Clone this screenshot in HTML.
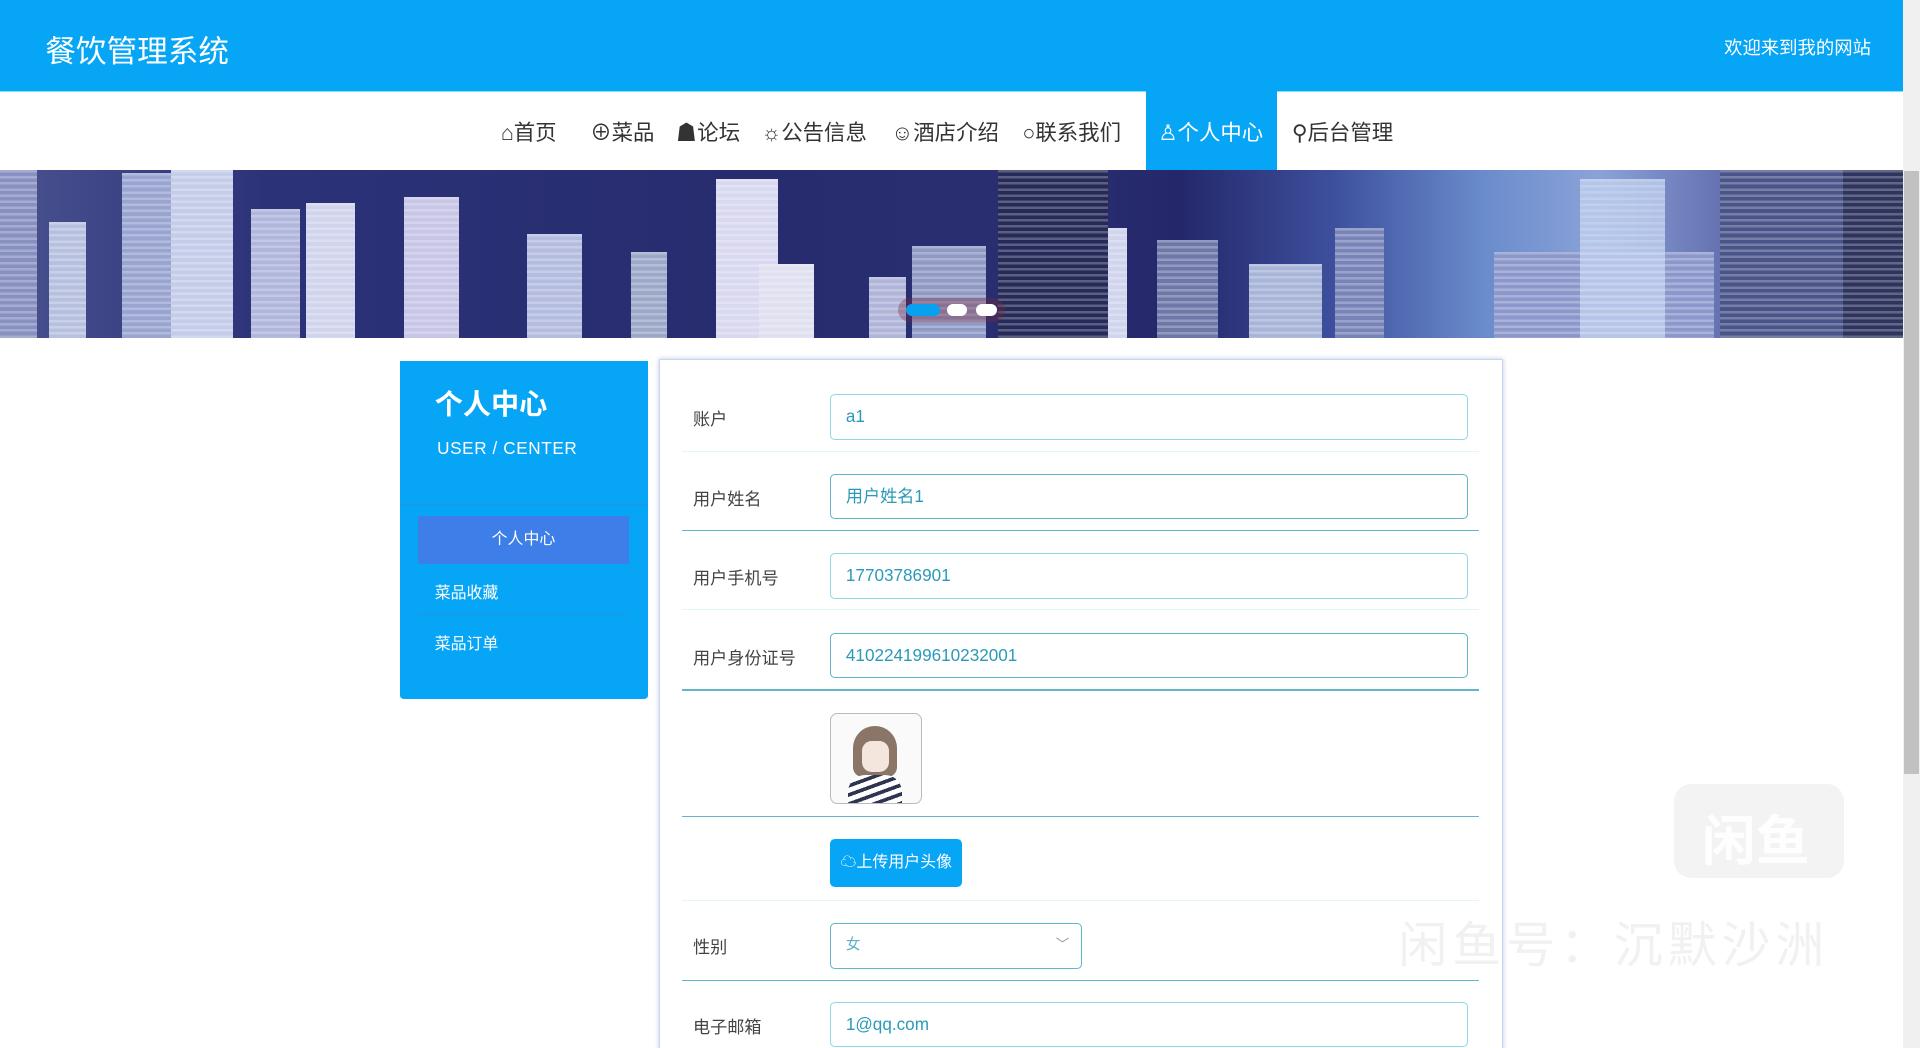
<!DOCTYPE html>
<html><head><meta charset="utf-8"><style>
html,body{margin:0;padding:0;overflow:hidden;background:#fff}
#w{zoom:1.22449;width:1568px;height:856px;position:relative;overflow:hidden;font-family:"Liberation Sans","Noto Sans CJK SC",sans-serif;background:#fff}
.a{position:absolute}
.hdr{left:0;top:0;width:1554px;height:74px;background:#06a5f5;border-bottom:1px solid #7be8f5}
.nav span{position:absolute;top:95px;font-size:17.5px;color:#333;white-space:nowrap}
.lbl{position:absolute;left:566px;font-size:14px;color:#444}
.inp{position:absolute;left:678px;border:1px solid #8fd8e6;border-radius:4px;font-size:14px;color:#2a9ab8;line-height:35px;padding-left:12px;box-sizing:border-box;width:521px;height:37px}
.sep{position:absolute;left:557px;width:651px;height:1px;background:#5fb7c9}
.sep.f{background:#e2f6f8}
.b{position:absolute;bottom:0;background:repeating-linear-gradient(180deg,rgba(255,255,255,.25) 0 2px,transparent 2px 5px)}
</style></head><body><div id="w">
<div class="a hdr"></div>
<div class="a" style="left:37px;top:21px;font-size:25px;color:#fff">餐饮管理系统</div>
<div class="a" style="left:1408px;top:28px;font-size:15px;color:#fff">欢迎来到我的网站</div>
<div class="a" style="left:1554px;top:0;width:14px;height:856px;background:#f0f0f0"></div>
<div class="a" style="left:1555px;top:140px;width:12px;height:492px;background:#c1c1c1"></div>
<div class="a" style="left:936px;top:74px;width:107px;height:65px;background:#06a5f5"></div>
<div class="nav">
<span style="left:409px">⌂首页</span>
<span style="left:482px">⊕菜品</span>
<span style="left:552px">☗论坛</span>
<span style="left:622px">☼公告信息</span>
<span style="left:728px">☺酒店介绍</span>
<span style="left:835px">○联系我们</span>
<span style="left:946px;color:#fff">♙个人中心</span>
<span style="left:1055px">⚲后台管理</span>
</div>
<div class="a" style="left:0;top:139px;width:1554px;height:137px;overflow:hidden;background:linear-gradient(90deg,#4a5290 0%,#2c3278 14%,#262c6e 40%,#2a2f72 55%,#24286a 62%,#3d4f9c 70%,#6a8ccc 78%,#8ba2d8 84%,#5c66a8 92%,#3c4282 100%)">
<div class="b" style="left:0;width:30px;height:137px;background-color:#8890c0"></div>
<div class="b" style="left:40px;width:30px;height:95px;background-color:#b8c0e0"></div>
<div class="b" style="left:100px;width:40px;height:135px;background-color:#9aa4d0"></div>
<div class="b" style="left:140px;width:50px;height:137px;background-color:#c4cce8"></div>
<div class="b" style="left:205px;width:40px;height:105px;background-color:#b0b6dc"></div>
<div class="b" style="left:250px;width:40px;height:110px;background-color:#d0d4ec"></div>
<div class="b" style="left:330px;width:45px;height:115px;background-color:#c8c6e6"></div>
<div class="b" style="left:430px;width:45px;height:85px;background-color:#b4bce0"></div>
<div class="b" style="left:515px;width:30px;height:70px;background-color:#9ca8c8"></div>
<div class="b" style="left:585px;width:50px;height:130px;background-color:#d8d8f0"></div>
<div class="b" style="left:620px;width:45px;height:60px;background-color:#e0e0f0"></div>
<div class="b" style="left:710px;width:30px;height:50px;background-color:#b0b4d8"></div>
<div class="b" style="left:745px;width:60px;height:75px;background-color:#9098c4"></div>
<div class="b" style="left:815px;width:90px;height:137px;background-color:#262a58"></div>
<div class="b" style="left:905px;width:15px;height:90px;background-color:#d0d4ec"></div>
<div class="b" style="left:945px;width:50px;height:80px;background-color:#6e78a8"></div>
<div class="b" style="left:1020px;width:60px;height:60px;background-color:#a8b4d8"></div>
<div class="b" style="left:1090px;width:40px;height:90px;background-color:#7884b8"></div>
<div class="b" style="left:1220px;width:180px;height:70px;background-color:#8c98cc"></div>
<div class="b" style="left:1290px;width:70px;height:130px;background-color:#c0d0f0;opacity:.8"></div>
<div class="b" style="left:1405px;width:100px;height:137px;background-color:#4a5488"></div>
<div class="b" style="left:1505px;width:49px;height:137px;background-color:#2e345e"></div>
</div>
<div class="a" style="left:733px;top:243px;width:88px;height:20px;border-radius:10px;background:rgba(120,40,60,.35)"></div>
<div class="a" style="left:740px;top:248px;width:28px;height:10px;border-radius:5px;background:#0aa0f0"></div>
<div class="a" style="left:773px;top:248px;width:17px;height:10px;border-radius:5px;background:#fff"></div>
<div class="a" style="left:797px;top:248px;width:17px;height:10px;border-radius:5px;background:#fff"></div>
<div class="a" style="left:327px;top:295px;width:202px;height:276px;background:#06a5f5;border-radius:0 0 3px 3px"></div>
<div class="a" style="left:355px;top:312px;font-size:23px;font-weight:bold;color:#fff">个人中心</div>
<div class="a" style="left:357px;top:358px;font-size:14px;color:#fff;letter-spacing:.5px">USER / CENTER</div>
<div class="a" style="left:327px;top:412px;width:202px;height:1px;background:#1a9be8"></div>
<div class="a" style="left:341px;top:421px;width:173px;height:40px;background:#3d7ee9;color:#fff;font-size:13px;text-align:center;line-height:40px">个人中心</div>
<div class="a" style="left:355px;top:474px;font-size:13px;color:#fff">菜品收藏</div>
<div class="a" style="left:341px;top:501px;width:173px;height:1px;background:#1a9be8"></div>
<div class="a" style="left:355px;top:515px;font-size:13px;color:#fff">菜品订单</div>
<div class="a" style="left:538px;top:293px;width:688px;height:580px;border:1px solid #c9d6ee;box-shadow:0 0 4px #b9c8ea;background:#fff"></div>
<div class="lbl" style="top:331px">账户</div><div class="inp" style="top:322px">a1</div>
<div class="sep f" style="top:368px"></div>
<div class="lbl" style="top:396px">用户姓名</div><div class="inp" style="top:387px;border-color:#5fb7c9">用户姓名1</div>
<div class="sep" style="top:433px"></div>
<div class="lbl" style="top:461px">用户手机号</div><div class="inp" style="top:452px">17703786901</div>
<div class="sep f" style="top:497px"></div>
<div class="lbl" style="top:526px">用户身份证号</div><div class="inp" style="top:517px;border-color:#5fb7c9">410224199610232001</div>
<div class="sep" style="top:563px"></div>
<div class="a" style="left:678px;top:582px;width:73px;height:73px;border:1px solid #bbb;border-radius:6px;background:#fafafa;overflow:hidden">
<div class="a" style="left:18px;top:10px;width:36px;height:42px;border-radius:18px 18px 8px 8px;background:#8a7566"></div>
<div class="a" style="left:25px;top:22px;width:22px;height:26px;border-radius:8px;background:#f4e6dc"></div>
<div class="a" style="left:14px;top:50px;width:44px;height:30px;border-radius:14px 14px 0 0;background:repeating-linear-gradient(160deg,#2d3550 0 3px,#fff 3px 7px)"></div>
</div>
<div class="sep" style="top:666px"></div>
<div class="a" style="left:678px;top:685px;width:108px;height:39px;background:#06a5f5;border-radius:4px;color:#fff;font-size:13px;line-height:39px;text-align:center">☁上传用户头像</div>
<div class="sep f" style="top:735px"></div>
<div class="lbl" style="top:762px">性别</div>
<div class="inp" style="top:754px;width:206px;border-color:#5fb7c9;font-size:12px;color:#5ab0c8">女<span style="position:absolute;right:10px;color:#999;font-size:11px">﹀</span></div>
<div class="sep" style="top:800px"></div>
<div class="lbl" style="top:827px">电子邮箱</div><div class="inp" style="top:818px">1@qq.com</div>
<div class="a" style="left:1367px;top:640px;width:139px;height:77px;border-radius:14px;background:rgba(235,235,235,.6)"></div>
<div class="a" style="left:1390px;top:652px;font-size:44px;color:rgba(255,255,255,.9);font-weight:bold">闲鱼</div>
<div class="a" style="left:1142px;top:740px;font-size:40px;letter-spacing:4px;color:rgba(210,210,210,.3)">闲鱼号：沉默沙洲</div>
</div></body></html>
